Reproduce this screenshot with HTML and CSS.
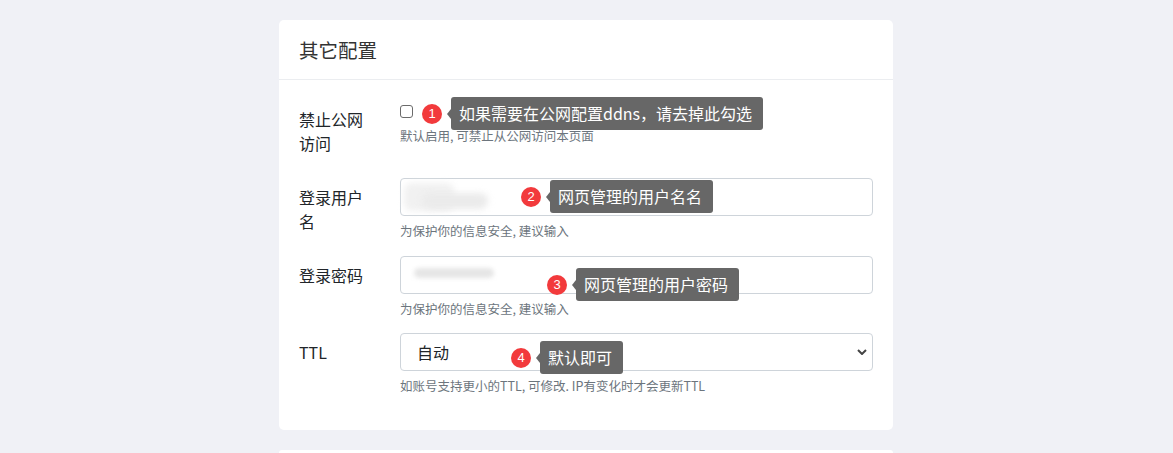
FILE: index.html
```html
<!DOCTYPE html>
<html lang="zh-CN">
<head>
<meta charset="utf-8">
<title>其它配置</title>
<link rel="stylesheet" href="styles.css">
</head>
<body>
<div class="page">
  <div class="card">
    <div class="card-header">其它配置</div>
    <div class="card-body">
      <div class="row">
        <label class="row-label">禁止公网访问</label>
        <div class="row-control">
          <div class="check-line"><input type="checkbox" class="check"></div>
          <div class="help help-tight">默认启用, 可禁止从公网访问本页面</div>
          <div class="annot annot-1"><span class="badge">1</span><span class="tip">如果需要在公网配置ddns，请去掉此勾选</span></div>
        </div>
      </div>
      <div class="row">
        <label class="row-label">登录用户名</label>
        <div class="row-control">
          <input type="text" class="field">
          <span class="blur blur-user"></span>
          <span class="blur blur-user2"></span>
          <div class="help">为保护你的信息安全, 建议输入</div>
          <div class="annot annot-2"><span class="badge">2</span><span class="tip">网页管理的用户名名</span></div>
        </div>
      </div>
      <div class="row row-tight">
        <label class="row-label">登录密码</label>
        <div class="row-control">
          <input type="text" class="field">
          <span class="blur blur-pass"></span>
          <div class="help">为保护你的信息安全, 建议输入</div>
          <div class="annot annot-3"><span class="badge">3</span><span class="tip">网页管理的用户密码</span></div>
        </div>
      </div>
      <div class="row">
        <label class="row-label">TTL</label>
        <div class="row-control">
          <select class="field select"><option>自动</option></select>
          <div class="help">如账号支持更小的TTL, 可修改. IP有变化时才会更新TTL</div>
          <div class="annot annot-4"><span class="badge">4</span><span class="tip">默认即可</span></div>
        </div>
      </div>
    </div>
  </div>
  <div class="card card-next"></div>
</div>
</body>
</html>
```
FILE: styles.css
```css
html, body {
  margin: 0;
  padding: 0;
  background: #f0f1f6;
  font-family: "Noto Sans CJK SC", "Noto Sans", sans-serif;
  color: #212529;
  overflow: hidden;
}
.page {
  width: 614px;
  margin: 0 auto 0 279px;
  padding-top: 20px;
  display: flex;
  flex-direction: column;
  gap: 20px;
}
.card {
  background: #fff;
  border-radius: 5px;
}
.card-header {
  height: 59px;
  display: flex;
  align-items: center;
  padding: 0 20px;
  font-size: 19.5px;
  color: #333;
  border-bottom: 1px solid #ebedf0;
}
.card-body {
  padding: 20px 20px 20px;
}
.row {
  display: grid;
  grid-template-columns: 101px 1fr;
  margin-bottom: 16px;
}
.row-tight {
  margin-bottom: 15px;
}
.row:last-child {
  margin-bottom: 15px;
}
.row-label {
  padding: 7px 26px 7px 0;
  font-size: 16px;
  line-height: 24px;
  color: #212529;
}
.row-control {
  position: relative;
}
.check-line {
  height: 22px;
}
.check {
  appearance: none;
  -webkit-appearance: none;
  display: block;
  width: 13px;
  height: 13px;
  margin: 5px 0 0 0;
  border: 1px solid #6b6b6b;
  border-radius: 3px;
  background: #fff;
  box-sizing: border-box;
}
.field {
  display: block;
  box-sizing: border-box;
  width: 100%;
  height: 38px;
  margin: 0;
  padding: 0 16px;
  border: 1px solid #ced4da;
  border-radius: 4px;
  background: #fff;
  font-family: inherit;
  font-size: 16px;
  color: #212529;
  outline: none;
}
.select {
  appearance: none;
  -webkit-appearance: none;
  padding-left: 16px;
  background-image: url("data:image/svg+xml,%3csvg xmlns='http://www.w3.org/2000/svg' viewBox='0 0 10 6'%3e%3cpath d='M1 1l4 4 4-4' fill='none' stroke='%23444' stroke-width='2'/%3e%3c/svg%3e");
  background-repeat: no-repeat;
  background-position: right 5px center;
  background-size: 10px 6px;
}
.help {
  margin-top: 6px;
  font-size: 12.5px;
  line-height: 18px;
  color: #6c757d;
  white-space: nowrap;
}
.help-tight {
  margin-top: 0;
}
.blur {
  position: absolute;
  display: block;
  border-radius: 8px;
}
.blur-user {
  left: 4px;
  top: 5px;
  width: 50px;
  height: 28px;
  background: #f1f1f1;
  filter: blur(3px);
}
.blur-user2 {
  left: 22px;
  top: 15px;
  width: 66px;
  height: 16px;
  background: #ebebeb;
  filter: blur(3px);
}
.blur-pass {
  left: 14px;
  top: 12px;
  width: 80px;
  height: 10px;
  background: #e6e6e6;
  filter: blur(2px);
}
.annot {
  position: absolute;
  display: flex;
  align-items: center;
  white-space: nowrap;
}
.annot-1 { left: 22px; top: -3px; }
.annot-2 { left: 121px; top: 2px; }
.annot-3 { left: 147px; top: 12px; }
.annot-4 { left: 111px; top: 8px; }
.badge {
  width: 20px;
  height: 20px;
  border-radius: 50%;
  background: #f23a3c;
  color: #fff;
  font-family: "Liberation Sans", "Noto Sans", sans-serif;
  font-size: 13px;
  line-height: 20px;
  text-align: center;
}
.tip {
  position: relative;
  margin-left: 9px;
  height: 33px;
  padding: 0 11px 0 8px;
  background: #676767;
  color: #fff;
  font-size: 16px;
  line-height: 33px;
  border-radius: 3px;
}
.tip::before {
  content: "";
  position: absolute;
  left: -4px;
  top: 50%;
  margin-top: -5px;
  border-top: 5px solid transparent;
  border-bottom: 5px solid transparent;
  border-right: 4px solid #676767;
}
.card-next {
  height: 3px;
  border-radius: 5px 5px 0 0;
}
```
